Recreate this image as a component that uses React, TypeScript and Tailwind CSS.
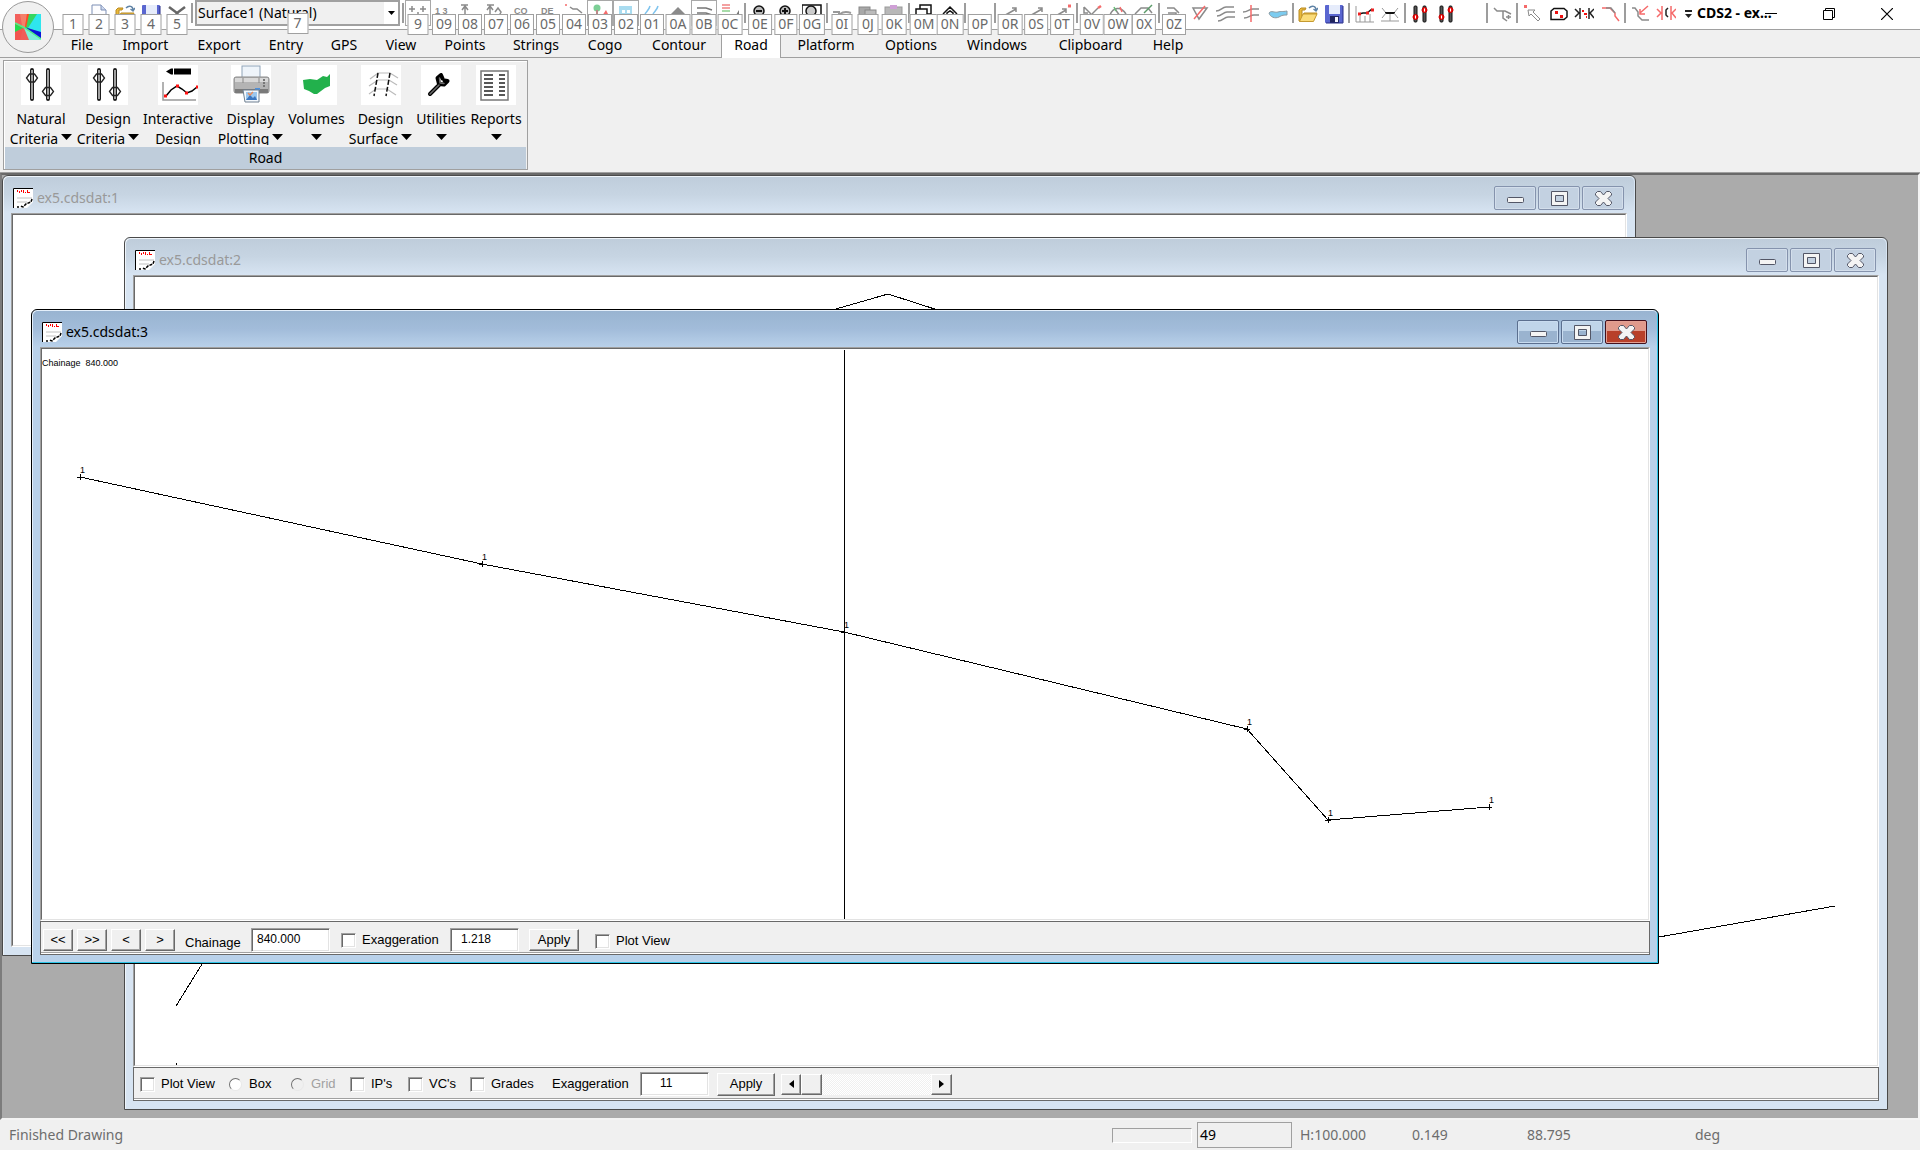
import { useState, type ReactNode } from "react";
import clsx from "clsx";

/* ---------- quick access bar ---------- */

const G = "#8a8a8a";
const R = "#f56a6a";

const folder = (
  <g>
    <path d="M1 6V17H15L19 9H6L4 14V6H7L8 4H3Z" fill="#e9b93b" stroke="#b98a22" strokeWidth="1" />
    <path d="M5 10H19L15.500 17.500H1.500Z" fill="#fbdc7a" stroke="#c59a31" strokeWidth="1" />
    <path d="M11 4C14 1 18 2 18 6M15.500 5L18 7L20 4" fill="none" stroke="#5f83a6" strokeWidth="1.500" />
  </g>
);
const floppy = (
  <g>
    <rect x="1" y="1" width="18" height="18" rx="1" fill="#5a66d0" />
    <rect x="5" y="1" width="11" height="9" fill="#e6ecfb" />
    <rect x="6" y="12" width="9" height="7" fill="#20245e" />
    <rect x="11" y="13" width="3" height="5" fill="#f4f6ff" />
    <path d="M19 2V19H2" fill="none" stroke="#262c86" />
  </g>
);
const sliders = (
  <g>
    <rect x="4" y="2" width="3" height="16" rx="1" fill="#555" stroke="#111" strokeWidth="1" />
    <rect x="13" y="2" width="3" height="16" rx="1" fill="#555" stroke="#111" strokeWidth="1" />
    <circle cx="5.500" cy="13" r="2.500" fill="#e11" stroke="#c00" />
    <circle cx="14.500" cy="6" r="2.500" fill="#e11" stroke="#c00" />
    <path d="M5.500 11.500V14.500M14.500 4.500V7.500" stroke="#fff" strokeWidth="1" />
  </g>
);

const icons: Record<string, ReactNode> = {
  page: (
    <g>
      <path d="M3 1H12L17 6V19H3Z" fill="#fdfdff" stroke="#7d8fb5" />
      <path d="M12 1V6H17" fill="#cdd8ee" stroke="#7d8fb5" />
    </g>
  ),
  folder,
  floppy,
  scissors: <path d="M2 3L10 9L18 3M10 9L14 16M10 9L6 16" fill="none" stroke="#666" strokeWidth="2.500" />,
  plus: <path d="M1 5H7M4 2V8M12 5H18M15 2V8M9 9H11" stroke={G} strokeWidth="1.500" />,
  n13: (
    <text x="1" y="10" fontSize="9" fontWeight="700" fill={G} fontFamily="Liberation Sans">
      1 3
    </text>
  ),
  axis: <path d="M1 1H8M5 12V2M2 6L5 2L8 6M9 12H13V16" fill="none" stroke={G} strokeWidth="1.500" />,
  axis2: <path d="M1 1H8M4 12V2M1 6L4 2L7 6M9 8L12 4L15 8L13 12" fill="none" stroke={G} strokeWidth="1.500" />,
  co: (
    <text x="2" y="10" fontSize="9" fontWeight="700" fill={G} fontFamily="Liberation Sans">
      CO
    </text>
  ),
  de: (
    <text x="3" y="10" fontSize="9" fontWeight="700" fill={G} fontFamily="Liberation Sans">
      DE
    </text>
  ),
  line: (
    <g>
      <path d="M1 1H3" stroke={R} strokeWidth="1.500" />
      <path d="M6 3L9 5H13L18 9" fill="none" stroke={G} strokeWidth="1.500" />
    </g>
  ),
  tree: (
    <g>
      <circle cx="7" cy="4" r="3.500" fill="#7ccf96" />
      <path d="M7 6V12" stroke="#b88" strokeWidth="2" />
      <path d="M12 12L16 6L19 12Z" fill={R} />
    </g>
  ),
  house: (
    <g>
      <rect x="3" y="2" width="13" height="11" fill="#a9dcf0" />
      <path d="M6 6H9V9H6ZM11 6H14V9H11Z" fill="#fff" />
    </g>
  ),
  water: <path d="M8 2C7 6 5 7 3 10M16 2C15 6 13 7 11 10" fill="none" stroke="#7fc4ee" strokeWidth="1.500" />,
  tri: <path d="M10 3L17 10H3Z" fill={G} />,
  road: <path d="M3 4H12L18 6M3 9H12L18 11" fill="none" stroke="#777" strokeWidth="1.500" />,
  legend: (
    <g>
      <path d="M2 1H10M2 4H10" stroke="#f3a1a1" strokeWidth="2" />
      <path d="M2 7H10" stroke="#a7dca9" strokeWidth="2" />
      <path d="M19 11V6L16 11Z" fill="#777" />
    </g>
  ),
  zoomOut: (
    <g>
      <circle cx="9" cy="7" r="5" fill="#bbb" stroke="#111" strokeWidth="1.500" />
      <path d="M6 7H12" stroke="#111" strokeWidth="2" />
    </g>
  ),
  zoomIn: (
    <g>
      <circle cx="9" cy="7" r="5" fill="#bbb" stroke="#111" strokeWidth="1.500" />
      <path d="M6 7H12M9 4V10" stroke="#111" strokeWidth="2" />
    </g>
  ),
  zoomAll: (
    <g>
      <rect x="0" y="1" width="19" height="16" fill="#fff" stroke="#111" strokeWidth="1.500" />
      <circle cx="9" cy="7" r="5" fill="#ccc" stroke="#111" strokeWidth="1.500" />
    </g>
  ),
  redo: <path d="M1 8H7V11M8 10C12 7 16 8 19 9" fill="none" stroke="#999" strokeWidth="2" />,
  copy: (
    <g>
      <rect x="1" y="3" width="11" height="8" fill="#a8a8a8" stroke="#888" />
      <rect x="7" y="6" width="11" height="10" fill="#bbb" stroke="#888" />
    </g>
  ),
  paste: (
    <g>
      <rect x="1" y="3" width="17" height="12" fill="#b8b8b8" stroke="#999" />
      <rect x="6" y="1" width="7" height="4" fill="#cfa0d6" />
    </g>
  ),
  stack: (
    <g>
      <rect x="6" y="1" width="11" height="9" fill="#fff" stroke="#111" strokeWidth="1.500" />
      <rect x="2" y="5" width="11" height="9" fill="#fff" stroke="#111" strokeWidth="1.500" />
    </g>
  ),
  home: <path d="M3 10L10 3L17 10M7 12V9L10 7L13 9V12" fill="none" stroke="#111" strokeWidth="1.500" />,
  arrow: <path d="M2 13L16 5M12 4H16V8" fill="none" stroke={G} strokeWidth="1.500" />,
  arrowDot: (
    <g>
      <path d="M2 13L14 6M10 5H14V9" fill="none" stroke={G} strokeWidth="1.500" />
      <path d="M16 2H19" stroke={R} strokeWidth="3" />
    </g>
  ),
  split: (
    <g>
      <path d="M2 3V9H6M2 3L10 11" fill="none" stroke={G} strokeWidth="1.500" />
      <path d="M10 10L16 4" stroke={G} strokeWidth="1.500" />
      <path d="M16 4L19 2" stroke={R} strokeWidth="2.500" />
    </g>
  ),
  arc: (
    <g>
      <path d="M2 11C5 3 13 2 18 10M7 5L12 12" fill="none" stroke={G} strokeWidth="1.500" />
      <path d="M12 3L14 8" stroke={R} strokeWidth="1.500" />
      <path d="M6 3L8 7" stroke="#6abf7a" strokeWidth="1.500" />
    </g>
  ),
  arc2: (
    <g>
      <path d="M1 10L7 4H14L18 9" fill="none" stroke={G} strokeWidth="1.500" />
      <path d="M10 9L18 1" stroke="#5a9a68" strokeWidth="1.500" />
    </g>
  ),
  path: <path d="M3 4H10L15 9M4 9H12V12" fill="none" stroke={G} strokeWidth="1.500" />,
  triCut: (
    <g>
      <path d="M3 4H17L9 15Z" fill="none" stroke={G} strokeWidth="1.500" />
      <path d="M4 15L15 2" stroke={R} strokeWidth="1.500" />
    </g>
  ),
  waves: (
    <path d="M0 7C5 7 6 3 10 3H18M1 12C6 12 7 8 11 8H19M2 17C7 17 8 13 12 13H19" fill="none" stroke={G} strokeWidth="1.500" />
  ),
  wavesCut: (
    <g>
      <path d="M1 8C6 8 7 5 11 5H17M2 14C7 14 8 11 12 11H17" fill="none" stroke={G} strokeWidth="1.500" />
      <path d="M9 1V18" stroke={R} strokeWidth="1.500" />
    </g>
  ),
  lake: <path d="M1 9C3 6 7 9 10 8C13 7 14 8 19 7V11C16 11 14 11 11 13C7 15 2 13 1 9Z" fill="#7cccf0" stroke="#8a9aa2" />,
  graph: (
    <g>
      <path d="M2 2V18H20M6 12V18M11 12V18M16 10V18" fill="none" stroke="#999" strokeWidth="1" />
      <path d="M5 10L9 9H13L18 5" fill="none" stroke="#111" strokeWidth="1.500" />
      <path d="M4 10H7M12 9H15M17 6H20" stroke="#e22" strokeWidth="3" />
    </g>
  ),
  section: (
    <g>
      <path d="M1 17H19M10 9V17M2 4L6 9M18 4L14 9" stroke="#999" strokeWidth="1" />
      <path d="M5 9H15" stroke="#111" strokeWidth="2" />
      <path d="M6 9L2 14M14 9L18 14" stroke="#999" />
    </g>
  ),
  sliders,
  branch: <path d="M2 4L5 7H13L19 10M11 7V14L15 17M14 13H19M16.500 11V15" fill="none" stroke={G} strokeWidth="1.500" />,
  cursor: (
    <g>
      <rect x="2" y="1" width="3" height="3" fill={R} />
      <path d="M6 6L7 12L9 10L16 17L18 15L11 8L13 6Z" fill="#fff" stroke={G} />
    </g>
  ),
  tag: (
    <g>
      <path d="M3 15.500V7L6 4.500H16L19 7V13L16 15.500Z" fill="#fff" stroke="#111" strokeWidth="1.500" />
      <rect x="7" y="7" width="3" height="3" fill="#e11" />
      <rect x="12" y="11" width="3" height="3" fill="#e11" />
    </g>
  ),
  clip: (
    <g>
      <path d="M1 5L5 9L1 13M6 4V15M15 4V15M20 5L16 9L20 14" fill="none" stroke="#222" strokeWidth="1.500" />
      <path d="M8 7H10M10 10H13M12 13H13" stroke="#e11" strokeWidth="2" />
    </g>
  ),
  bend: (
    <g>
      <path d="M2 4H10L15 9V12L19 17" fill="none" stroke={R} strokeWidth="1.500" />
      <path d="M6 4H11L15 9" fill="none" stroke={G} strokeWidth="1.500" />
    </g>
  ),
  trim: (
    <g>
      <path d="M2 4H5L8 8V12L12 16H19" fill="none" stroke={G} strokeWidth="1.500" />
      <path d="M18 2L10 9M10 5V10H15" fill="none" stroke={R} strokeWidth="1.500" />
    </g>
  ),
  mirror: (
    <g>
      <path d="M1 5L5 9L1 13M6 2V16M15 2V16M20 5L16 9L20 14" fill="none" stroke={R} strokeWidth="1.500" />
      <path d="M12 4L10 6V11L12 13" fill="none" stroke="#222" strokeWidth="1.500" />
    </g>
  ),
};

type Tool = { icon?: string; tip?: string; boxed?: boolean } | "|";

const fileTools: Tool[] = [
  { tip: "1" },
  { tip: "2", icon: "page" },
  { tip: "3", icon: "folder" },
  { tip: "4", icon: "floppy" },
  { tip: "5", icon: "scissors" },
  "|",
];

const drawTools: Tool[] = [
  "|",
  { tip: "9", icon: "plus", boxed: true },
  { tip: "09", icon: "n13" },
  { tip: "08", icon: "axis" },
  { tip: "07", icon: "axis2" },
  { tip: "06", icon: "co" },
  { tip: "05", icon: "de" },
  { tip: "04", icon: "line" },
  { tip: "03", icon: "tree", boxed: true },
  { tip: "02", icon: "house", boxed: true },
  { tip: "01", icon: "water" },
  { tip: "0A", icon: "tri" },
  { tip: "0B", icon: "road", boxed: true },
  { tip: "0C", icon: "legend" },
  "|",
  { tip: "0E", icon: "zoomOut" },
  { tip: "0F", icon: "zoomIn" },
  { tip: "0G", icon: "zoomAll" },
  "|",
  { tip: "0I", icon: "redo" },
  { tip: "0J", icon: "copy" },
  { tip: "0K", icon: "paste" },
  "|",
  { tip: "0M", icon: "stack" },
  { tip: "0N", icon: "home" },
  "|",
  { tip: "0P" },
  "|",
  { tip: "0R", icon: "arrow" },
  { tip: "0S", icon: "arrow" },
  { tip: "0T", icon: "arrowDot" },
  "|",
  { tip: "0V", icon: "split" },
  { tip: "0W", icon: "arc" },
  { tip: "0X", icon: "arc2" },
  "|",
  { tip: "0Z", icon: "path" },
  { icon: "triCut" },
  { icon: "waves" },
  { icon: "wavesCut" },
  { icon: "lake" },
  "|",
  { icon: "folder" },
  { icon: "floppy" },
  "|",
  { icon: "graph" },
  { icon: "section" },
  "|",
  { icon: "sliders" },
  { icon: "sliders" },
  {},
  "|",
  { icon: "branch" },
  "|",
  { icon: "cursor" },
  { icon: "tag" },
  { icon: "clip" },
  { icon: "bend" },
  "|",
  { icon: "trim" },
  { icon: "mirror" },
];

function KeyTip({ children }: { children: ReactNode }) {
  return (
    <span className="absolute top-[13px] left-1/2 z-10 flex h-[21px] min-w-[21px] -translate-x-1/2 items-center justify-center border border-[#a0a0a0] bg-white px-[3px] pb-0.5 text-sm text-[#6a6a6a]">
      {children}
    </span>
  );
}

function Tools({ items }: { items: Tool[] }) {
  return (
    <>
      {items.map((t, i) =>
        t === "|" ? (
          <span key={i} className="flex w-1 shrink-0 justify-center pt-[3px]">
            <span className="h-5 w-0.5 bg-[#9d9d9d]" />
          </span>
        ) : (
          <button
            key={i}
            type="button"
            aria-label={t.icon ?? "command"}
            className={clsx(
              "relative h-[26px] w-[26px] shrink-0 border pt-[2px] pl-[2px]",
              t.boxed ? "border-[#a8a8a8]" : "border-transparent",
            )}
          >
            {t.icon && (
              <svg width="20" height="20" viewBox="0 0 20 20" className="block">
                {icons[t.icon]}
              </svg>
            )}
            {t.tip && <KeyTip>{t.tip}</KeyTip>}
          </button>
        ),
      )}
    </>
  );
}

function TitleBar() {
  return (
    <header className="relative flex h-[30px] border-b border-[#a0a0a0] bg-white pl-[60px]">
      <Tools items={fileTools} />
      <div className="relative mx-px h-[26px] w-[205px] shrink-0 border-2 border-[#a0a0a0] bg-[#f0f0f0]">
        <select
          aria-label="Surface"
          className="h-full w-full appearance-none bg-transparent pl-px text-sm leading-[22px] text-black outline-none"
        >
          <option>Surface1 (Natural)</option>
        </select>
        <span className="pointer-events-none absolute inset-y-0 right-0 flex w-[14px] items-center justify-center bg-white">
          <svg width="7" height="4" viewBox="0 0 7 4">
            <path d="M0 0H7L3.500 4Z" fill="#000" />
          </svg>
        </span>
        <span className="absolute -top-0.5 left-1/2">
          <KeyTip>7</KeyTip>
        </span>
      </div>
      <Tools items={drawTools} />
      <button type="button" aria-label="Customize toolbar" className="flex w-[18px] shrink-0 items-center justify-center">
        <svg width="7" height="9" viewBox="0 0 7 9">
          <path d="M0 0H7V2H0ZM0 4H7L3.500 8Z" fill="#222" />
        </svg>
      </button>
      <h1 className="shrink-0 text-sm leading-[26px] font-bold whitespace-nowrap text-black">CDS2 - ex...</h1>
      <div className="absolute top-0 right-1 flex h-[28px]">
        <button type="button" aria-label="Minimize" className="flex w-[58px] items-center justify-center">
          <svg width="12" height="12" viewBox="0 0 12 12">
            <path d="M0 5.500H12" stroke="#000" />
          </svg>
        </button>
        <button type="button" aria-label="Restore" className="flex w-[58px] items-center justify-center">
          <svg width="12" height="12" viewBox="0 0 12 12">
            <path d="M2.500 2.500V0.500H11.500V9.500H9.500M0.500 2.500H9.500V11.500H0.500Z" fill="none" stroke="#000" />
          </svg>
        </button>
        <button type="button" aria-label="Close" className="flex w-[58px] items-center justify-center">
          <svg width="12" height="12" viewBox="0 0 12 12">
            <path d="M0 0L12 12M12 0L0 12" stroke="#000" strokeWidth="1.200" />
          </svg>
        </button>
      </div>
    </header>
  );
}

function AppButton() {
  return (
    <button
      type="button"
      aria-label="Application menu"
      className="absolute top-px left-0.5 z-10 flex h-[52px] w-[52px] items-center justify-center rounded-full border border-[#9a9a9a] bg-[#f0f0f0]"
    >
      <svg width="26" height="26" viewBox="0 0 26 26">
        <rect width="26" height="26" fill="#ef5d58" />
        <path d="M0 0H5L7 13L0 9Z" fill="#f2605c" />
        <path d="M5 0H12L10 14L7 12Z" fill="#f5806a" />
        <path d="M12 0H15L12 14L10 13Z" fill="#ff4a20" />
        <path d="M14 0H23L14 15L11 14Z" fill="#35d660" />
        <path d="M22 0H26V19L13 14Z" fill="#2fe6ee" />
        <path d="M0 10L8 14L2 26H0Z" fill="#22dd4d" />
        <path d="M0 18L8 14L5 26H0Z" fill="#f25550" />
        <path d="M9 14L26 25V26H14Z" fill="#7df0d8" />
        <path d="M9 13L26 18V25Z" fill="#0a16d8" />
        <path d="M0 9L10 14L26 25" fill="none" stroke="#4cf58a" strokeWidth="1.500" />
      </svg>
    </button>
  );
}

/* ---------- menu tabs ---------- */

const tabs: [string, string][] = [
  ["File", "w-[52px]"],
  ["Import", "w-[75px]"],
  ["Export", "w-[72px]"],
  ["Entry", "w-[62px]"],
  ["GPS", "w-[54px]"],
  ["View", "w-[60px]"],
  ["Points", "w-[68px]"],
  ["Strings", "w-[74px]"],
  ["Cogo", "w-[64px]"],
  ["Contour", "w-[84px]"],
  ["Road", "w-[60px]"],
  ["Platform", "w-[90px]"],
  ["Options", "w-[80px]"],
  ["Windows", "w-[92px]"],
  ["Clipboard", "w-[95px]"],
  ["Help", "w-[60px]"],
];

function MenuTabs() {
  const [active, setActive] = useState("Road");
  return (
    <nav className="flex h-7 border-b border-[#a0a0a0] pl-14">
      {tabs.map(([name, width]) => (
        <button
          key={name}
          type="button"
          onClick={() => setActive(name)}
          className={clsx(
            width,
            "h-7 shrink-0 pt-0.5 text-sm leading-[26px] text-black",
            active === name && "border-x border-[#a0a0a0] bg-white",
          )}
        >
          {name}
        </button>
      ))}
    </nav>
  );
}

/* ---------- ribbon ---------- */

const criteria = (
  <g>
    <path d="M11 5V34M27 5V34" stroke="#1c1c1c" strokeWidth="4" strokeLinecap="round" />
    <path d="M11 5V34M27 5V34" stroke="#a0a0a0" strokeWidth="2" />
    <path
      d="M5.500 13L8.500 9H13.500L16.500 13L13.500 17H8.500ZM21.500 26.500L24.500 22.500H29.500L32.500 26.500L29.500 30.500H24.500Z"
      fill="none"
      stroke="#222"
      strokeWidth="1.300"
    />
  </g>
);

type Command = { lines: [string, string?]; arrow: boolean; width: string; icon: ReactNode };

const commands: Command[] = [
  { lines: ["Natural", "Criteria"], arrow: true, width: "w-[68px]", icon: criteria },
  { lines: ["Design", "Criteria"], arrow: true, width: "w-[66px]", icon: criteria },
  {
    lines: ["Interactive", "Design"],
    arrow: false,
    width: "w-[74px]",
    icon: (
      <g>
        <path d="M8 6.500L13 3.500V9.500Z" fill="#000" />
        <path d="M13 3.500H15V9.500H13ZM16 3.500H33V9.500H16Z" fill="#000" />
        <path d="M5 17V35H38" fill="none" stroke="#999" strokeWidth="1.500" />
        <path d="M8 31L13 25L19 21L24 24L29 28L34 26L39 22" fill="none" stroke="#000" strokeWidth="1.500" />
        <path d="M6 31H9M18 21H21M27 28H30M38 22H40" stroke="#f11" strokeWidth="3" />
      </g>
    ),
  },
  {
    lines: ["Display", "Plotting"],
    arrow: true,
    width: "w-[71px]",
    icon: (
      <g>
        <rect x="11" y="1" width="18" height="14" fill="#eef4fa" stroke="#8fa3b8" />
        <rect x="3" y="12" width="35" height="16" rx="2" fill="#b4b4b4" stroke="#8a8a8a" />
        <path d="M4 13H37V17H4Z" fill="#d8d8d8" />
        <path d="M12 13V18M28 13V18" stroke="#888" />
        <path d="M33 14V22" stroke="#777" strokeWidth="2" strokeDasharray="2 1" />
        <rect x="4" y="24" width="33" height="4" fill="#7a7a7a" />
        <rect x="24" y="23" width="5" height="2" fill="#4f8fd8" />
        <path d="M12 25H28V37H14Z" fill="#f4f8fc" stroke="#6f7f90" />
        <rect x="15" y="27" width="11" height="8" fill="#9cc7ee" />
        <path d="M15 35L19 30L22 33L24 31L26 35Z" fill="#3b76c0" />
        <path d="M17 28L19 30L22 27" fill="none" stroke="#e98a5a" strokeWidth="1.500" />
      </g>
    ),
  },
  {
    lines: ["Volumes"],
    arrow: true,
    width: "w-[61px]",
    icon: <path d="M6 15L13 14L20 15L26 11L30 12L33 9V21L28 23L20 29H17L12 26L7 24Z" fill="#22b14c" />,
  },
  {
    lines: ["Design", "Surface"],
    arrow: true,
    width: "w-[67px]",
    icon: (
      <g>
        <path
          d="M9 14L17 8H29L37 13M8 21L17 15H28L36 20M8 29L15 24H26L35 30"
          fill="none"
          stroke="#bbb"
          strokeWidth="1.200"
        />
        <path d="M17 8L13 31M29 8L25 31" stroke="#111" strokeWidth="1.500" strokeDasharray="5 2" />
      </g>
    ),
  },
  {
    lines: ["Utilities"],
    arrow: true,
    width: "w-[54px]",
    icon: (
      <g fill="none" strokeLinecap="round" strokeLinejoin="round">
        <path d="M9 29L18 20M20 10L16.500 13L18 19L23 19.500L26.500 16M20 10L21.500 13.500M26.500 16L23.500 15.500" stroke="#000" strokeWidth="4" />
        <path d="M9 29L18 20M18.500 13L19 18L23 18.500" stroke="#6a6a6a" strokeWidth="1.500" />
      </g>
    ),
  },
  {
    lines: ["Reports"],
    arrow: true,
    width: "w-[56px]",
    icon: (
      <g>
        <rect x="5" y="6" width="27" height="29" fill="#fff" stroke="#777" strokeWidth="1.500" />
        <path
          d="M8 10H17M8 14H17M8 18H17M8 22H17M8 26H17M8 30H17M23 10H29M23 14H29M23 18H29M23 22H29M23 26H29M23 30H29"
          stroke="#222"
          strokeWidth="1.600"
        />
      </g>
    ),
  },
];

function DropArrow() {
  return (
    <svg width="11" height="6" viewBox="0 0 11 6" className="-mt-1 shrink-0">
      <path d="M0 0H11L5.500 6Z" fill="#000" />
    </svg>
  );
}

function Ribbon() {
  return (
    <div className="flex h-[115px] border-b border-[#a0a0a0] bg-[#f0f0f0] px-[3px] pt-0.5 pb-0.5">
      <section className="flex w-[525px] flex-col border border-[#a0a0a0] bg-[#f0f0f0] shadow-[inset_1px_1px_0_#fff]">
        <div className="flex h-[86px] overflow-hidden pl-[3px]">
          {commands.map((c, i) => (
            <button key={i} type="button" className={clsx(c.width, "flex shrink-0 flex-col items-center pt-1 text-sm text-black")}>
              <svg width="40" height="40" viewBox="0 0 40 40" className="shrink-0 bg-white">
                {c.icon}
              </svg>
              <span className="mt-1 h-5 leading-5 whitespace-nowrap">{c.lines[0]}</span>
              <span className="flex h-4 items-start gap-[3px] overflow-hidden leading-5 whitespace-nowrap">
                {c.lines[1]}
                {c.arrow && (
                  <span className="flex h-5 items-center">
                    <DropArrow />
                  </span>
                )}
              </span>
            </button>
          ))}
        </div>
        <h2 className="mx-px h-[22px] bg-[#bfcddb] text-center text-sm leading-[22px] text-black">Road</h2>
      </section>
    </div>
  );
}

/* ---------- document windows ---------- */

function DocIcon() {
  return (
    <svg width="20" height="20" viewBox="0 0 20 20" className="shrink-0">
      <path d="M0 0H20V14L14 20H0Z" fill="#fff" />
      <path d="M0.500 20V0.500H20" fill="none" stroke="#000" />
      <path d="M4.500 2V4M6.500 3V5M8.500 2V4M10.500 2V5M12.500 4V5M14.500 2V5M15 4.500H17" fill="none" stroke="#f00" />
      <path d="M4 10H19M4 14H14" stroke="#c0c0c0" />
      <path d="M19 11L18 14L13 16L10 19L7 18M4 19H6" fill="none" stroke="#000" strokeWidth="1.500" strokeDasharray="3 1" />
    </svg>
  );
}

const glyphs = {
  Minimize: <rect x="3.500" y="7.500" width="16" height="5" rx="1" fill="#f4f4f4" stroke="#535666" />,
  Maximize: (
    <path d="M3.500 1.500H19.500V15.500H3.500ZM7.500 5.500V11.500H15.500V5.500Z" fillRule="evenodd" fill="#f4f4f4" stroke="#535666" />
  ),
  Close: (
    <path
      d="M3.500 3.500L5.500 1.500H8.500L11.500 5L14.500 1.500H17.500L19.500 3.500V5L16 8.500L19.500 12V13.500L17.500 15.500H14.500L11.500 12L8.500 15.500H5.500L3.500 13.500V12L7 8.500L3.500 5Z"
      fill="#f4f4f4"
      stroke="#535666"
    />
  ),
};

function WindowButtons({ active }: { active?: boolean }) {
  return (
    <div className="flex gap-0.5">
      {(["Minimize", "Maximize", "Close"] as const).map((name) => (
        <button
          key={name}
          type="button"
          aria-label={name}
          className={clsx(
            "flex h-6 w-[42px] items-center justify-center rounded-[2px] border",
            !active && "border-[#8593ad] bg-[#c3d1e1] shadow-[inset_0_0_0_1px_#d3deeb]",
            active &&
              name !== "Close" &&
              "border-[#5b6f8f] bg-linear-to-b from-[#c0d5ea] from-45% to-[#9ab3cf] to-45% shadow-[inset_0_0_0_1px_#c9dcf0]",
            active &&
              name === "Close" &&
              "border-[#43101c] bg-linear-to-b from-[#e09a8c] from-45% to-[#b8402a] to-45% shadow-[inset_0_0_0_1px_#e3a093]",
          )}
        >
          <svg width="23" height="17" viewBox="0 0 23 17">
            {glyphs[name]}
          </svg>
        </button>
      ))}
    </div>
  );
}

function DocWindow({
  title,
  place,
  active,
  children,
  toolbar,
}: {
  title: string;
  place: string;
  active?: boolean;
  children?: ReactNode;
  toolbar?: ReactNode;
}) {
  return (
    <section
      className={clsx(
        place,
        "absolute flex flex-col rounded-t-[6px] border px-2 pb-2",
        active
          ? "border-black bg-[#b9d1ea] shadow-[inset_-1px_-1px_0_#2cc5e8,inset_1px_1px_0_#e4effa]"
          : "border-[#4a4a4a] bg-[#d7e4f2] shadow-[inset_1px_1px_0_#eef4fa]",
      )}
    >
      <div
        className={clsx(
          "-mx-[7px] mt-px flex h-9 shrink-0 items-center rounded-t-[5px] bg-linear-to-b pr-2 pl-[9px] pt-1.5",
          active
            ? "from-[#99b4d1] via-[#a2bcda] to-[#b9d1ea]"
            : "from-[#bfcddb] via-[#c7d5e3] to-[#d7e4f2]",
        )}
      >
        <DocIcon />
        <h2 className={clsx("ml-1 grow text-sm leading-5", active ? "text-black" : "text-[#999]")}>{title}</h2>
        <div className="pr-0.5">
          <WindowButtons active={active} />
        </div>
      </div>
      <div className="flex min-h-0 grow flex-col border border-t-[#a0a0a0] border-r-white border-b-white border-l-[#a0a0a0] bg-white">
        <div className="min-h-0 grow overflow-hidden border border-t-[#696969] border-r-[#e3e3e3] border-b-[#e3e3e3] border-l-[#696969]">
          {children}
        </div>
      </div>
      {toolbar}
    </section>
  );
}

function Toolbar({ className, children }: { className?: string; children: ReactNode }) {
  return (
    <div
      className={clsx(
        className,
        "flex h-[34px] shrink-0 items-center border border-[#696969] bg-[#f0f0f0] font-['Liberation_Sans',Arial,sans-serif] text-[13px] whitespace-nowrap text-black shadow-[inset_0_-1px_0_#fff,inset_0_-2px_0_#a0a0a0]",
      )}
    >
      {children}
    </div>
  );
}

function RaisedButton({ className, label, children }: { className: string; label?: string; children?: ReactNode }) {
  return (
    <button
      type="button"
      aria-label={label}
      className={clsx(
        className,
        "flex shrink-0 items-center justify-center border border-t-white border-r-[#696969] border-b-[#696969] border-l-white bg-[#f0f0f0] shadow-[inset_-1px_-1px_0_#a0a0a0]",
      )}
    >
      {children}
    </button>
  );
}

function Field({ className, value, label }: { className: string; value: string; label: string }) {
  return (
    <input
      type="text"
      aria-label={label}
      defaultValue={value}
      className={clsx(
        className,
        "h-6 shrink-0 border border-t-[#a0a0a0] border-r-white border-b-white border-l-[#a0a0a0] bg-white pb-0.5 text-xs text-black shadow-[inset_1px_1px_0_#696969,inset_-1px_-1px_0_#e3e3e3] outline-none",
      )}
    />
  );
}

function Check({ className, children }: { className?: string; children: ReactNode }) {
  return (
    <label className={clsx(className, "flex shrink-0 items-center gap-1.5")}>
      <input
        type="checkbox"
        className="h-[15px] w-[15px] appearance-none border border-t-[#a0a0a0] border-r-white border-b-white border-l-[#a0a0a0] bg-white shadow-[inset_1px_1px_0_#696969,inset_-1px_-1px_0_#e3e3e3] checked:bg-[#696969]"
      />
      {children}
    </label>
  );
}

function Radio({ className, disabled, children }: { className?: string; disabled?: boolean; children: ReactNode }) {
  return (
    <label className={clsx(className, "flex shrink-0 items-center gap-[7px]", disabled && "text-[#a0a0a0]")}>
      <input
        type="radio"
        name="backdrop"
        disabled={disabled}
        className="h-[13px] w-[13px] appearance-none rounded-full border-[1.5px] border-t-[#707070] border-r-[#e8e8e8] border-b-[#e8e8e8] border-l-[#707070] bg-white checked:bg-black disabled:bg-[#f0f0f0]"
      />
      {children}
    </label>
  );
}

const sectionPoints: [number, number][] = [
  [38, 128],
  [440, 215],
  [802, 283],
  [1205, 380],
  [1286, 471],
  [1447, 458],
];

function CrossSection() {
  return (
    <svg width="100%" height="100%" shapeRendering="crispEdges" className="block font-['Liberation_Sans',Arial,sans-serif]">
      <text x="0" y="17" fontSize="9" fill="#000" xmlSpace="preserve">
        {"Chainage  840.000"}
      </text>
      <path d="M802.500 1V572" stroke="#000" />
      <polyline points={sectionPoints.map((p) => p.join(",")).join(" ")} fill="none" stroke="#000" />
      {sectionPoints.map(([x, y]) => (
        <g key={x}>
          <path d={`M${x - 3} ${y + 0.5}H${x + 3}M${x + 0.5} ${y - 3}V${y + 3}`} stroke="#000" />
          <text x={x} y={y - 4} fontSize="9" fill="#000">
            1
          </text>
        </g>
      ))}
    </svg>
  );
}

function SectionToolbar() {
  return (
    <Toolbar className="pt-1">
      <div className="ml-0.5 flex gap-1">
        <RaisedButton className="h-[22px] w-[30px]">&lt;&lt;</RaisedButton>
        <RaisedButton className="h-[22px] w-[30px]">&gt;&gt;</RaisedButton>
        <RaisedButton className="h-[22px] w-[30px]">&lt;</RaisedButton>
        <RaisedButton className="h-[22px] w-[30px]">&gt;</RaisedButton>
      </div>
      <span className="mt-1.5 ml-2.5 w-[66px]">Chainage</span>
      <Field className="w-[79px] pl-[5px]" value="840.000" label="Chainage" />
      <Check className="ml-[11px] w-[109px]">Exaggeration</Check>
      <Field className="w-[69px] pl-2.5" value="1.218" label="Exaggeration factor" />
      <RaisedButton className="ml-2.5 h-[22px] w-[50px]">Apply</RaisedButton>
      <Check className="mt-0.5 ml-4">Plot View</Check>
    </Toolbar>
  );
}

function ProfileToolbar() {
  return (
    <Toolbar>
      <Check className="ml-1.5 w-[89px]">Plot View</Check>
      <Radio className="w-[62px]">Box</Radio>
      <Radio disabled className="w-[59px]">
        Grid
      </Radio>
      <Check className="w-[58px]">IP's</Check>
      <Check className="w-[62px]">VC's</Check>
      <Check className="w-[82px]">Grades</Check>
      <span className="w-[88px]">Exaggeration</span>
      <Field className="w-[69px] pl-[19px]" value="11" label="Exaggeration" />
      <RaisedButton className="ml-2 h-[23px] w-[58px]">Apply</RaisedButton>
      <div className="ml-1.5 flex h-[21px] w-[171px] bg-[repeating-conic-gradient(#fff_0_25%,#f0f0f0_0_50%)] bg-size-[2px_2px]">
        <RaisedButton className="w-5" label="Scroll left">
          <svg width="5" height="8" viewBox="0 0 5 8">
            <path d="M5 0V8L0 4Z" />
          </svg>
        </RaisedButton>
        <RaisedButton className="w-[21px]" label="Scroll thumb" />
        <RaisedButton className="ml-auto w-[21px]" label="Scroll right">
          <svg width="5" height="8" viewBox="0 0 5 8">
            <path d="M0 0V8L5 4Z" />
          </svg>
        </RaisedButton>
      </div>
    </Toolbar>
  );
}

function Profile() {
  return (
    <svg width="100%" height="100%" shapeRendering="crispEdges" className="block">
      <path d="M41 729L90 650M673 40L753 17L837 44M1450 673L1700 629M41.500 786V790" fill="none" stroke="#000" />
    </svg>
  );
}

/* ---------- page ---------- */

export default function App() {
  return (
    <div className="relative flex h-screen flex-col overflow-hidden bg-[#f0f0f0] font-['Noto_Sans','Open_Sans',sans-serif] text-sm">
      <AppButton />
      <TitleBar />
      <MenuTabs />
      <Ribbon />

      <main className="relative min-h-0 grow overflow-hidden border-2 border-t-[#696969] border-r-[#f4f4f4] border-b-[#f4f4f4] border-l-[#7c7c7c] bg-[#ababab]">
        <DocWindow title="ex5.cdsdat:1" place="top-0 left-0 h-[781px] w-[1634px]" />
        <DocWindow title="ex5.cdsdat:2" place="top-[62px] left-[122px] h-[873px] w-[1764px]" toolbar={<ProfileToolbar />}>
          <Profile />
        </DocWindow>
        <DocWindow
          title="ex5.cdsdat:3"
          place="top-[134px] left-[29px] h-[655px] w-[1628px]"
          active
          toolbar={<SectionToolbar />}
        >
          <CrossSection />
        </DocWindow>
      </main>

      <footer className="flex h-[30px] shrink-0 items-center bg-[#f0f0f0] pl-[9px] text-sm text-[#6d6d6d]">
        <span className="grow">Finished Drawing</span>
        <span className="h-[15px] w-20 border border-t-[#a0a0a0] border-r-white border-b-white border-l-[#a0a0a0]" />
        <span className="ml-[5px] flex h-[26px] w-[95px] items-center border border-[#a0a0a0] pl-0.5 text-black">49</span>
        <span className="ml-2 w-28">H:100.000</span>
        <span className="w-[115px]">0.149</span>
        <span className="w-[168px]">88.795</span>
        <span className="w-[225px]">deg</span>
      </footer>
    </div>
  );
}
